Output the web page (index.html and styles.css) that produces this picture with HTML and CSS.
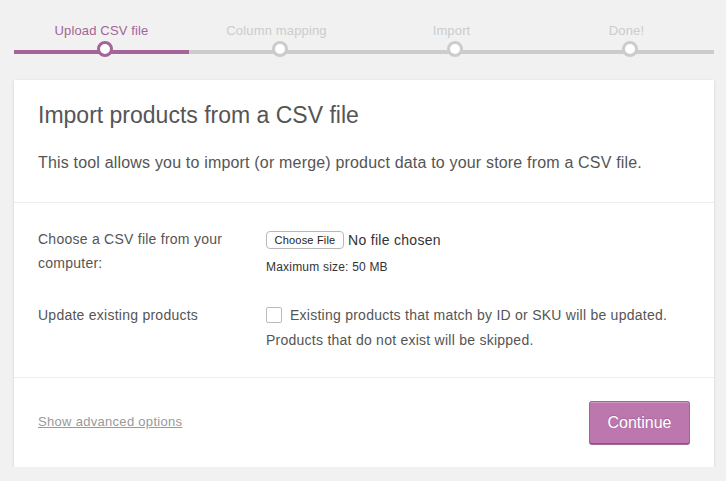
FILE: index.html
```html
<!DOCTYPE html>
<html>
<head>
<meta charset="utf-8">
<link rel="stylesheet" href="styles.css">
</head>
<body>
<ol class="steps">
  <li class="step active">Upload CSV file</li>
  <li class="step">Column mapping</li>
  <li class="step">Import</li>
  <li class="step">Done!</li>
</ol>
<div class="card">
  <header class="card-head">
    <h2 class="title">Import products from a CSV file</h2>
    <p class="intro">This tool allows you to import (or merge) product data to your store from a CSV file.</p>
  </header>
  <section class="card-body">
    <div class="row">
      <div class="label">Choose a CSV file from your computer:</div>
      <div class="field">
        <div class="file"><button class="file-btn">Choose File</button><span class="file-name">No file chosen</span></div>
        <div class="hint">Maximum size: 50 MB</div>
      </div>
    </div>
    <div class="row">
      <div class="label">Update existing products</div>
      <div class="field text">
        <span class="check"></span>Existing products that match by ID or SKU will be updated. Products that do not exist will be skipped.
      </div>
    </div>
  </section>
  <footer class="card-foot">
    <a class="advanced" href="#">Show advanced options</a>
    <button class="continue">Continue</button>
  </footer>
</div>
</body>
</html>
```

FILE: styles.css
```css
* { box-sizing: border-box; }
body {
  margin: 0;
  background: #f1f1f1;
  font-family: "Liberation Sans", Arial, sans-serif;
  color: #555;
}
.steps {
  list-style: none;
  margin: 0 12px 0 14px;
  padding: 0;
  display: flex;
}
.step {
  flex: 1;
  position: relative;
  text-align: center;
  font-size: 13px;
  letter-spacing: 0.15px;
  line-height: 20px;
  padding: 21px 0 9px;
  border-bottom: 4px solid #ccc;
  color: #ccc;
}
.step::before {
  content: "";
  position: absolute;
  left: 50%;
  bottom: -7px;
  width: 10px;
  height: 10px;
  margin-left: -5px;
  border-radius: 50%;
  background: #fff;
  border: 3px solid #ccc;
}
.step.active {
  color: #a46497;
  border-bottom-color: #a46497;
}
.step.active::before { border-color: #a46497; }

.card {
  margin: 26px 12px 0 14px;
  background: #fff;
  box-shadow: 0 1px 3px rgba(0,0,0,.13);
}
.card-head {
  padding: 21px 24px 27px;
  border-bottom: 1px solid #eee;
}
.title {
  margin: 0 0 22px;
  font-size: 23px;
  line-height: 28px;
  font-weight: 400;
  color: #555;
}
.intro {
  margin: 0;
  font-size: 16px;
  letter-spacing: 0.18px;
  line-height: 24px;
  color: #555;
}
.card-body {
  padding: 24px 24px 24px;
  border-bottom: 1px solid #eee;
  display: flex;
  flex-direction: column;
  gap: 28px;
}
.row {
  display: flex;
  gap: 24px;
}
.label {
  width: 204px;
  flex: none;
  font-size: 14px;
  letter-spacing: 0.25px;
  line-height: 24px;
  color: #555;
}
.field { flex: 1; font-size: 14px; }
.file {
  display: flex;
  align-items: center;
  height: 20px;
  margin-top: 3px;
}
.file-btn {
  font-family: inherit;
  font-size: 11px;
  letter-spacing: 0.2px;
  color: #222;
  background: #fff;
  border: 1px solid #b8b8b8;
  border-radius: 4px;
  height: 18px;
  width: 78px;
  padding: 0;
  margin: 0 4px 0 0;
  line-height: 16px;
}
.file-name { color: #333; font-size: 14px; letter-spacing: 0.3px; }
.hint {
  font-size: 12px;
  letter-spacing: 0.2px;
  line-height: 14px;
  margin-top: 10px;
  color: #333;
}
.field.text {
  line-height: 25px;
  letter-spacing: 0.25px;
  color: #555;
}
.check {
  display: inline-block;
  width: 16px;
  height: 16px;
  border: 1px solid #bbb;
  border-radius: 2px;
  vertical-align: -3px;
  margin-right: 8px;
}
.card-foot {
  padding: 23px 24px 23px;
  display: flex;
  justify-content: space-between;
  align-items: center;
}
.advanced {
  font-size: 13px;
  letter-spacing: 0.3px;
  color: #999;
  text-decoration: underline;
  margin-top: -3px;
}
.continue {
  font-family: inherit;
  font-size: 16px;
  color: #fff;
  background: #bb77ae;
  border: 1px solid #a36597;
  border-bottom-color: #8e5282;
  border-radius: 3px;
  box-shadow: inset 0 1px 0 rgba(255,255,255,.25), 0 1px 0 #a36597;
  text-shadow: 0 -1px 1px #a36597;
  height: 43px;
  width: 101px;
  padding: 0;
}
```
